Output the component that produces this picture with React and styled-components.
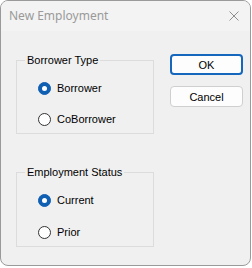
import React, { useState } from "react";
import styled, { createGlobalStyle } from "styled-components";

const GlobalStyle = createGlobalStyle`
  html, body {
    margin: 0;
    padding: 0;
    background: #ffffff;
  }
  body {
    font-family: "Liberation Sans", Arial, sans-serif;
    font-size: 11px;
    color: #000;
  }
`;

const Window = styled.div`
  width: 251px;
  height: 266px;
  box-sizing: border-box;
  border: 1px solid #9a9a9a;
  border-radius: 8px;
  background: #f0f0f0;
  overflow: hidden;
  display: flex;
  flex-direction: column;
`;

const TitleBar = styled.div`
  height: 30px;
  background: #f3f3f3;
  display: flex;
  align-items: center;
  justify-content: space-between;
  padding: 0 9px 0 8px;
`;

const Title = styled.span`
  font-family: "Noto Sans", "Open Sans", sans-serif;
  font-size: 12px;
  color: #9a9a9a;
  padding-bottom: 2px;
`;

const CloseIcon = styled.svg`
  width: 10px;
  height: 10px;
  margin-right: 2px;
  margin-bottom: 1px;
`;

const Body = styled.div`
  flex: 1;
  display: flex;
  gap: 16px;
  padding: 23px 0 0 15px;
`;

const Column = styled.div`
  display: flex;
  flex-direction: column;
  gap: ${(p) => p.$gap || 0}px;
`;

const GroupBox = styled.fieldset`
  width: 138px;
  box-sizing: border-box;
  margin: 0;
  padding: ${(p) => p.$padTop}px 0 1px 0;
  border: 1px solid #dcdcdc;
  display: flex;
  flex-direction: column;
  gap: ${(p) => p.$gap}px;
`;

const Legend = styled.legend`
  margin-left: 8px;
  padding: 0 2px;
  line-height: 13px;
  font-size: 11px;
`;

const RadioRow = styled.label`
  height: 26px;
  display: flex;
  align-items: center;
  gap: 6px;
  padding-left: 21px;
  cursor: default;
`;

const RadioCircle = styled.span`
  width: 13px;
  height: 13px;
  box-sizing: border-box;
  border-radius: 50%;
  flex-shrink: 0;
  background: ${(p) => (p.$checked ? "#0f5fb3" : "#ffffff")};
  border: 1px solid ${(p) => (p.$checked ? "#0f5fb3" : "#333333")};
  display: flex;
  align-items: center;
  justify-content: center;

  &::after {
    content: "";
    width: 5px;
    height: 5px;
    border-radius: 50%;
    background: #ffffff;
    display: ${(p) => (p.$checked ? "block" : "none")};
  }
`;

const Button = styled.button`
  width: 73px;
  height: 21px;
  box-sizing: border-box;
  font-family: "Liberation Sans", Arial, sans-serif;
  font-size: 11px;
  color: #000;
  background: #fdfdfd;
  border: ${(p) => (p.$primary ? "2px solid #1467bd" : "1px solid #cfcfcf")};
  border-radius: 4px;
  padding: 0;
`;

const Radio = ({ label, checked, onSelect }) => (
  <RadioRow onClick={onSelect}>
    <RadioCircle $checked={checked} />
    {label}
  </RadioRow>
);

export default function App() {
  const [borrowerType, setBorrowerType] = useState("Borrower");
  const [status, setStatus] = useState("Current");

  return (
    <>
      <GlobalStyle />
      <Window>
        <TitleBar>
          <Title>New Employment</Title>
          <CloseIcon viewBox="0 0 10 10">
            <path d="M0.5 0.5 L9.5 9.5 M9.5 0.5 L0.5 9.5" stroke="#8f8f8f" strokeWidth="1" />
          </CloseIcon>
        </TitleBar>
        <Body>
          <Column $gap={32}>
            <GroupBox $padTop={8} $gap={5}>
              <Legend>Borrower Type</Legend>
              {["Borrower", "CoBorrower"].map((t) => (
                <Radio
                  key={t}
                  label={t}
                  checked={borrowerType === t}
                  onSelect={() => setBorrowerType(t)}
                />
              ))}
            </GroupBox>
            <GroupBox $padTop={8} $gap={6}>
              <Legend>Employment Status</Legend>
              {["Current", "Prior"].map((t) => (
                <Radio
                  key={t}
                  label={t}
                  checked={status === t}
                  onSelect={() => setStatus(t)}
                />
              ))}
            </GroupBox>
          </Column>
          <Column $gap={11}>
            <Button $primary>OK</Button>
            <Button>Cancel</Button>
          </Column>
        </Body>
      </Window>
    </>
  );
}
